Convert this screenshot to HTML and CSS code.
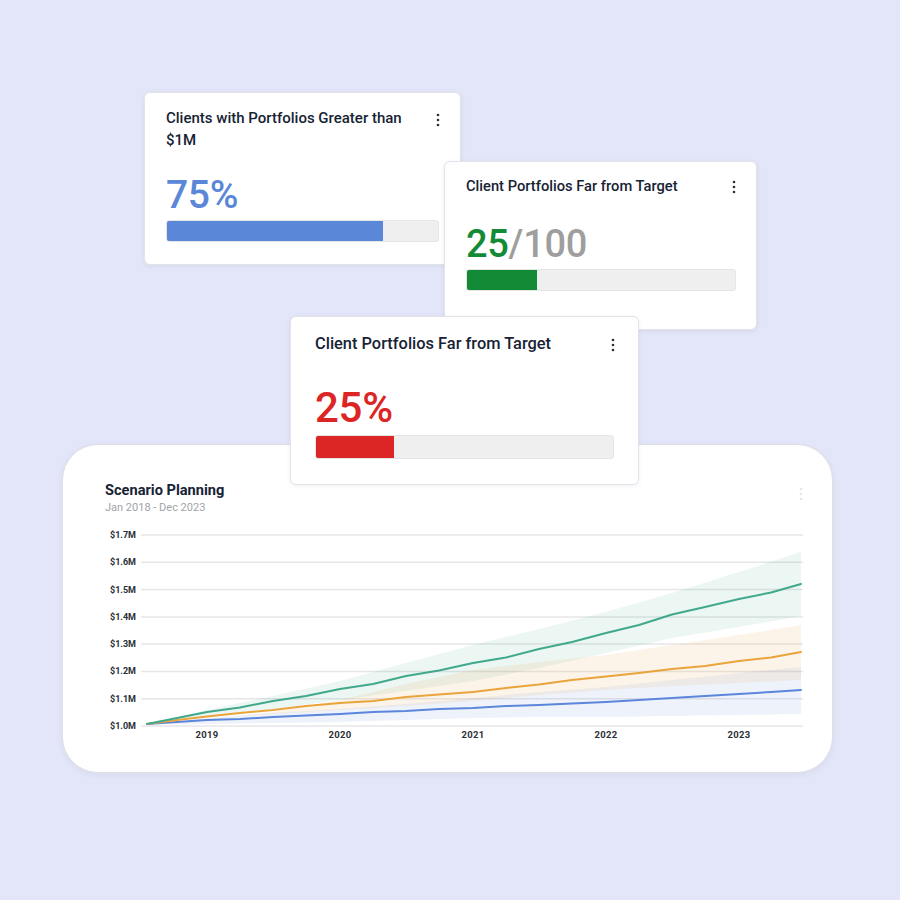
FILE: index.html
```html
<!DOCTYPE html>
<html lang="en">
<head>
<meta charset="utf-8">
<title>Portfolio dashboard</title>
<link rel="stylesheet" href="styles.css">
</head>
<body>
<div class="stage">

  <section class="chart-card">
    <div class="chart-head">
      <div class="chart-titles">
        <h2 class="chart-title">Scenario Planning</h2>
        <p class="chart-sub">Jan 2018 - Dec 2023</p>
      </div>
      <svg class="dots faint" width="4" height="14" viewBox="0 0 4 14"><circle cx="2" cy="2" r="1.3"/><circle cx="2" cy="7" r="1.3"/><circle cx="2" cy="12" r="1.3"/></svg>
    </div>
    <svg class="plot" width="710" height="220" viewBox="100 525 710 220">
      <g class="grid">
        <line x1="140" x2="802" y1="535" y2="535"/>
        <line x1="140" x2="802" y1="562.3" y2="562.3"/>
        <line x1="140" x2="802" y1="589.6" y2="589.6"/>
        <line x1="140" x2="802" y1="616.9" y2="616.9"/>
        <line x1="140" x2="802" y1="644.1" y2="644.1"/>
        <line x1="140" x2="802" y1="671.4" y2="671.4"/>
        <line x1="140" x2="802" y1="698.7" y2="698.7"/>
        <line x1="140" x2="802" y1="726" y2="726"/>
      </g>
      <g class="ylabels">
        <text x="135" y="538">$1.7M</text>
        <text x="135" y="565.3">$1.6M</text>
        <text x="135" y="592.6">$1.5M</text>
        <text x="135" y="619.9">$1.4M</text>
        <text x="135" y="647.1">$1.3M</text>
        <text x="135" y="674.4">$1.2M</text>
        <text x="135" y="701.7">$1.1M</text>
        <text x="135" y="729">$1.0M</text>
      </g>
      <g class="xlabels">
        <text x="206" y="737.5">2019</text>
        <text x="339" y="737.5">2020</text>
        <text x="472" y="737.5">2021</text>
        <text x="605" y="737.5">2022</text>
        <text x="738" y="737.5">2023</text>
      </g>
      <polygon class="band-green" points="146,724 206,710 272,696 339,681 405,663 472,645 538,629 605,612 671,593 738,572 800,552 800,616 738,627 671,638 605,653 538,668 472,681 405,691 339,700 272,709 206,717"/>
      <polygon class="band-orange" points="146,724 206,720 272,712 339,700 405,684 472,670 538,662 605,655 671,645 738,635 800,625 800,680 738,683 671,686 605,690 538,695 472,701 405,706 339,710 272,714 206,719"/>
      <polygon class="band-blue" points="146,724 206,718 272,713 339,709 405,704 472,698 538,692 605,687 671,680 738,673 800,667 800,714 738,715 671,716 605,717 538,717 472,718 405,720 339,722 272,723 206,724"/>
      <polyline class="line-blue" points="146,724 176,722 206,720 239,719 272,717 305,715.5 339,714 372,712 405,711 438,709 472,708 505,706 538,705 571,703.5 605,702 638,700 671,698 704,696 738,694 770,692 800,690"/>
      <polyline class="line-orange" points="146,724 176,720 206,716.5 239,713 272,710 305,706 339,703 372,701 405,697 438,694.5 472,692 505,688 538,684.5 571,680 605,676.5 638,673 671,669 704,666 738,661 770,657.5 800,652"/>
      <polyline class="line-green" points="146,724 176,718 206,712 239,707.5 272,701 305,696 339,689 372,684 405,676 438,670.5 472,663 505,657.5 538,649 571,642 605,633 638,625 671,614.5 704,607 738,599 770,592.5 800,584"/>
    </svg>
  </section>

  <section class="kpi kpi-one">
    <div class="kpi-head">
      <h3 class="kpi-title">Clients with Portfolios Greater than $1M</h3>
      <svg class="dots" width="4" height="14" viewBox="0 0 4 14"><circle cx="2" cy="2" r="1.3"/><circle cx="2" cy="7" r="1.3"/><circle cx="2" cy="12" r="1.3"/></svg>
    </div>
    <div class="kpi-value blue">75%</div>
    <div class="bar"><div class="bar-fill fill-blue" style="width: 79.8%"></div></div>
  </section>

  <section class="kpi kpi-two">
    <div class="kpi-head">
      <h3 class="kpi-title">Client Portfolios Far from Target</h3>
      <svg class="dots" width="4" height="14" viewBox="0 0 4 14"><circle cx="2" cy="2" r="1.3"/><circle cx="2" cy="7" r="1.3"/><circle cx="2" cy="12" r="1.3"/></svg>
    </div>
    <div class="kpi-value"><span class="green">25</span><span class="grey">/100</span></div>
    <div class="bar"><div class="bar-fill fill-green" style="width: 26%"></div></div>
  </section>

  <section class="kpi kpi-three">
    <div class="kpi-head">
      <h3 class="kpi-title">Client Portfolios Far from Target</h3>
      <svg class="dots" width="4" height="14" viewBox="0 0 4 14"><circle cx="2" cy="2" r="1.3"/><circle cx="2" cy="7" r="1.3"/><circle cx="2" cy="12" r="1.3"/></svg>
    </div>
    <div class="kpi-value red">25%</div>
    <div class="bar"><div class="bar-fill fill-red" style="width: 26.3%"></div></div>
  </section>

</div>
</body>
</html>
```

FILE: styles.css
```css
* { box-sizing: border-box; }

html, body {
  margin: 0;
  padding: 0;
}

body {
  background: #e3e6f8;
  font-family: Roboto, "Liberation Sans", Arial, sans-serif;
  color: #1b2636;
}

.stage {
  position: relative;
  width: 900px;
  height: 900px;
  overflow: hidden;
}

/* ---------- KPI cards ---------- */
.kpi {
  position: absolute;
  display: flex;
  flex-direction: column;
  background: #ffffff;
  border: 1px solid #e3e4ea;
  border-radius: 6px;
  box-shadow: 0 1px 4px rgba(40, 50, 90, 0.08);
}

.kpi-head {
  display: flex;
  justify-content: space-between;
  align-items: flex-start;
  gap: 10px;
}

.kpi-title {
  margin: 0;
  flex: 1;
  font-weight: 500;
  color: #172334;
}

.dots {
  flex: none;
  fill: #2a2f38;
}

.dots.faint {
  fill: #e6e6e8;
}

.kpi-value {
  font-weight: 500;
  letter-spacing: -0.3px;
}

.blue { color: #5b87d8; }
.green { color: #138a36; }
.grey { color: #9e9e9e; }
.red { color: #dc2626; }

.bar {
  background: #efefef;
  border: 1px solid #e6e6e6;
  border-radius: 3px;
  overflow: hidden;
  display: flex;
}

.bar-fill {
  height: 100%;
}

.fill-blue { background: #5b87d8; }
.fill-green { background: #138a36; }
.fill-red { background: #dc2626; }

/* card 1 */
.kpi-one {
  left: 144px;
  top: 92px;
  width: 317px;
  height: 173px;
  padding: 14px 21px 0 21px;
  z-index: 2;
}
.kpi-one .kpi-title {
  font-size: 15px;
  line-height: 22px;
  max-width: 258px;
}
.kpi-one .dots { margin-top: 6px; margin-right: -1px; }
.kpi-one .kpi-value {
  margin-top: 22px;
  font-size: 39px;
  line-height: 44px;
}
.kpi-one .bar {
  margin-top: 3px;
  height: 22px;
}

/* card 2 */
.kpi-two {
  left: 444px;
  top: 161px;
  width: 313px;
  height: 169px;
  padding: 14px 20px 0 21px;
  z-index: 3;
}
.kpi-two .kpi-title {
  font-size: 14.7px;
  line-height: 20px;
}
.kpi-two .dots { margin-top: 4px; }
.kpi-two .kpi-value {
  margin-top: 27px;
  font-size: 38px;
  line-height: 42px;
}
.kpi-two .bar {
  margin-top: 4px;
  height: 22px;
}

/* card 3 */
.kpi-three {
  left: 290px;
  top: 316px;
  width: 349px;
  height: 169px;
  padding: 16px 24px 0 24px;
  z-index: 4;
}
.kpi-three .kpi-title {
  font-size: 16.4px;
  line-height: 22px;
}
.kpi-three .dots { margin-top: 5px; margin-right: -1px; }
.kpi-three .kpi-value {
  margin-top: 30px;
  font-size: 42px;
  line-height: 46px;
}
.kpi-three .bar {
  margin-top: 4px;
  height: 24px;
}

/* ---------- chart card ---------- */
.chart-card {
  position: absolute;
  left: 62px;
  top: 444px;
  width: 771px;
  height: 329px;
  padding: 36px 0 0 38px;
  background: #ffffff;
  border: 1px solid #dfe0e6;
  border-radius: 36px;
  box-shadow: 0 2px 6px rgba(40, 50, 90, 0.06);
  z-index: 1;
  display: flex;
  flex-direction: column;
}

.chart-head {
  display: flex;
  justify-content: space-between;
  align-items: flex-start;
  padding-left: 4px;
  padding-right: 29px;
}

.chart-titles {
  display: flex;
  flex-direction: column;
  gap: 2px;
}

.chart-title {
  margin: 0;
  font-size: 14.6px;
  line-height: 18px;
  font-weight: 700;
  color: #172334;
}

.chart-sub {
  margin: 0;
  font-size: 11px;
  line-height: 14px;
  color: #a0a4aa;
}

.chart-head .dots { margin-top: 6px; }

.plot {
  display: block;
  margin-top: 10px;
}

.grid line {
  stroke: #e6e6e8;
  stroke-width: 1.5;
}

.ylabels text {
  font-family: Roboto, "Liberation Sans", Arial, sans-serif;
  font-size: 9px;
  font-weight: 700;
  fill: #2b2f36;
  text-anchor: end;
}

.xlabels text {
  font-family: Roboto, "Liberation Sans", Arial, sans-serif;
  font-size: 9.5px;
  font-weight: 700;
  fill: #2b2f36;
  text-anchor: middle;
  letter-spacing: 0.3px;
}

.band-green { fill: rgba(64, 169, 139, 0.10); }
.band-orange { fill: rgba(240, 168, 70, 0.12); }
.band-blue { fill: rgba(91, 134, 219, 0.10); }

.line-green, .line-orange, .line-blue {
  fill: none;
  stroke-width: 2;
  stroke-linejoin: round;
  stroke-linecap: round;
}
.line-green { stroke: #41a98b; }
.line-orange { stroke: #e9a43c; }
.line-blue { stroke: #5b86db; }
```
